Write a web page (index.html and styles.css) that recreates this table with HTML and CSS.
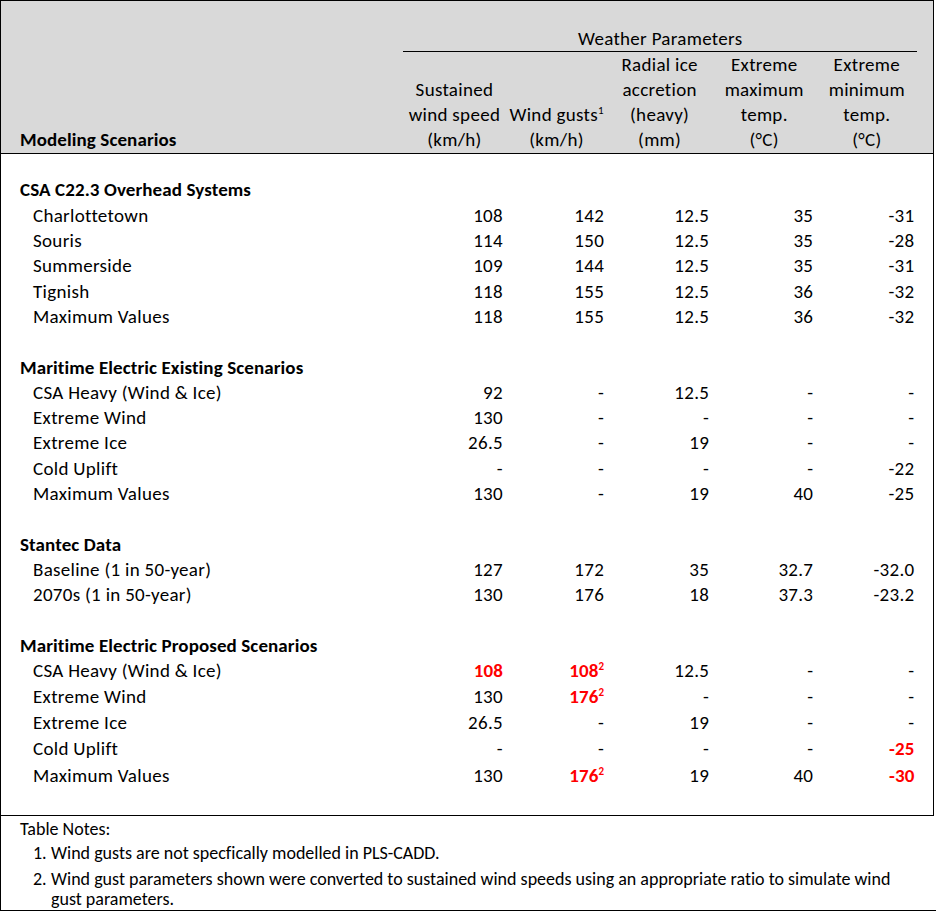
FILE: index.html
```html
<!DOCTYPE html>
<html lang="en">
<head>
<meta charset="utf-8">
<title>Weather Parameters</title>
<link rel="stylesheet" href="styles.css">
</head>
<body>
<div class="sheet">
  <table class="wx">
    <colgroup>
      <col class="c-label">
      <col class="c-1">
      <col class="c-2">
      <col class="c-3">
      <col class="c-4">
      <col class="c-5">
      <col class="c-pad">
    </colgroup>
    <thead>
      <tr class="h-top">
        <th></th>
        <th colspan="5" class="grp">Weather Parameters</th>
        <th></th>
      </tr>
      <tr class="h-cols">
        <th class="lbl">Modeling Scenarios</th>
        <th>Sustained<br>wind speed<br>(km/h)</th>
        <th>Wind gusts<sup>1</sup><br>(km/h)</th>
        <th>Radial ice<br>accretion<br>(heavy)<br>(mm)</th>
        <th>Extreme<br>maximum<br>temp.<br>(°C)</th>
        <th>Extreme<br>minimum<br>temp.<br>(°C)</th>
        <th></th>
      </tr>
    </thead>
    <tbody>
      <tr class="blank first"><td colspan="7"></td></tr>
      <tr class="sec"><td colspan="7">CSA C22.3 Overhead Systems</td></tr>
      <tr><td class="item">Charlottetown</td><td>108</td><td>142</td><td>12.5</td><td>35</td><td>-31</td><td></td></tr>
      <tr><td class="item">Souris</td><td>114</td><td>150</td><td>12.5</td><td>35</td><td>-28</td><td></td></tr>
      <tr><td class="item">Summerside</td><td>109</td><td>144</td><td>12.5</td><td>35</td><td>-31</td><td></td></tr>
      <tr><td class="item">Tignish</td><td>118</td><td>155</td><td>12.5</td><td>36</td><td>-32</td><td></td></tr>
      <tr><td class="item">Maximum Values</td><td>118</td><td>155</td><td>12.5</td><td>36</td><td>-32</td><td></td></tr>
      <tr class="blank"><td colspan="7"></td></tr>
      <tr class="sec"><td colspan="7">Maritime Electric Existing Scenarios</td></tr>
      <tr><td class="item">CSA Heavy (Wind &amp; Ice)</td><td>92</td><td>-</td><td>12.5</td><td>-</td><td>-</td><td></td></tr>
      <tr><td class="item">Extreme Wind</td><td>130</td><td>-</td><td>-</td><td>-</td><td>-</td><td></td></tr>
      <tr><td class="item">Extreme Ice</td><td>26.5</td><td>-</td><td>19</td><td>-</td><td>-</td><td></td></tr>
      <tr><td class="item">Cold Uplift</td><td>-</td><td>-</td><td>-</td><td>-</td><td>-22</td><td></td></tr>
      <tr><td class="item">Maximum Values</td><td>130</td><td>-</td><td>19</td><td>40</td><td>-25</td><td></td></tr>
      <tr class="blank"><td colspan="7"></td></tr>
      <tr class="sec"><td colspan="7">Stantec Data</td></tr>
      <tr><td class="item">Baseline (1 in 50-year)</td><td>127</td><td>172</td><td>35</td><td>32.7</td><td>-32.0</td><td></td></tr>
      <tr><td class="item">2070s (1 in 50-year)</td><td>130</td><td>176</td><td>18</td><td>37.3</td><td>-23.2</td><td></td></tr>
      <tr class="blank"><td colspan="7"></td></tr>
      <tr class="sec"><td colspan="7">Maritime Electric Proposed Scenarios</td></tr>
      <tr><td class="item">CSA Heavy (Wind &amp; Ice)</td><td class="hl">108</td><td class="hl">108<sup>2</sup></td><td>12.5</td><td>-</td><td>-</td><td></td></tr>
      <tr class="tall"><td class="item">Extreme Wind</td><td>130</td><td class="hl">176<sup>2</sup></td><td>-</td><td>-</td><td>-</td><td></td></tr>
      <tr class="tall"><td class="item">Extreme Ice</td><td>26.5</td><td>-</td><td>19</td><td>-</td><td>-</td><td></td></tr>
      <tr class="tall"><td class="item">Cold Uplift</td><td>-</td><td>-</td><td>-</td><td>-</td><td class="hl">-25</td><td></td></tr>
      <tr class="last"><td class="item">Maximum Values</td><td>130</td><td class="hl">176<sup>2</sup></td><td>19</td><td>40</td><td class="hl">-30</td><td></td></tr>
      <tr class="tail"><td colspan="7"></td></tr>
    </tbody>
  </table>
  <div class="notes">
    <p class="notes-title">Table Notes:</p>
    <ol class="notes-list">
      <li><span class="num">1.</span><span class="txt">Wind gusts are not specfically modelled in PLS-CADD.</span></li>
      <li><span class="num">2.</span><span class="txt">Wind gust parameters shown were converted to sustained wind speeds using an appropriate ratio to simulate wind gust parameters.</span></li>
    </ol>
  </div>
</div>
</body>
</html>
```

FILE: styles.css
```css
html, body {
  margin: 0;
  padding: 0;
  background: #ffffff;
}

body {
  font-family: "Carlito", "Lato", "Liberation Sans", sans-serif;
  font-size: 19px;
  letter-spacing: 0.3px;
  font-variant-ligatures: none;
  color: #000000;
}

.sheet {
  width: 936px;
}

.wx {
  width: 934px;
  border-collapse: collapse;
  table-layout: fixed;
  border: 1px solid #000000;
}

.c-label { width: 402px; }
.c-1 { width: 103px; }
.c-2 { width: 101px; }
.c-3 { width: 105px; }
.c-4 { width: 104px; }
.c-5 { width: 101px; }
.c-pad { width: 16px; }

.wx th,
.wx td {
  padding: 0;
  white-space: nowrap;
}

.wx thead tr {
  background: #d9d9d9;
}

.wx thead th {
  font-weight: normal;
  text-align: center;
  vertical-align: bottom;
  line-height: 25px;
}

.h-top {
  height: 51px;
}

.h-top .grp {
  border-bottom: 1px solid #000000;
}

.h-cols {
  height: 100px;
  border-bottom: 1px solid #000000;
}

.wx thead .h-cols th {
  padding-bottom: 1px;
}

.h-cols .lbl {
  text-align: left;
  padding-left: 19px;
  font-weight: bold;
  letter-spacing: 0.1px;
}

.wx sup {
  font-size: 11px;
  line-height: 0;
  vertical-align: 0.6em;
  letter-spacing: 0;
}

.wx tbody tr {
  height: 25.3px;
}

.wx tbody tr.first {
  height: 24.3px;
}

.wx tbody td {
  line-height: 20px;
  text-align: right;
  padding-right: 3px;
  vertical-align: middle;
}

.wx tbody tr.sec td {
  text-align: left;
  font-weight: bold;
  letter-spacing: 0.1px;
  padding-left: 19px;
}

.wx tbody td.item {
  text-align: left;
  padding-left: 32px;
}

.wx tbody tr.tall {
  height: 26px;
}

.wx tbody tr.last {
  height: 29px;
}

.wx tbody tr.tail {
  height: 25px;
}

.wx td.hl {
  color: #ff0000;
  font-weight: bold;
  letter-spacing: 0.1px;
}

.notes {
  border-left: 1px solid #000000;
  border-bottom: 1px solid #000000;
  padding: 3px 0 1px 19px;
  font-size: 18px;
  letter-spacing: 0;
  line-height: 20px;
}

.notes-title {
  margin: 0 0 4px 0;
}

.notes-list {
  list-style: none;
  margin: 0;
  padding: 0 30px 0 13px;
}

.notes-list li {
  display: flex;
  margin-bottom: 6px;
}

.notes-list li:last-child {
  margin-bottom: 0;
}

.notes-list .num {
  flex: 0 0 18px;
}

.notes-list .txt {
  flex: 1 1 auto;
}
```
